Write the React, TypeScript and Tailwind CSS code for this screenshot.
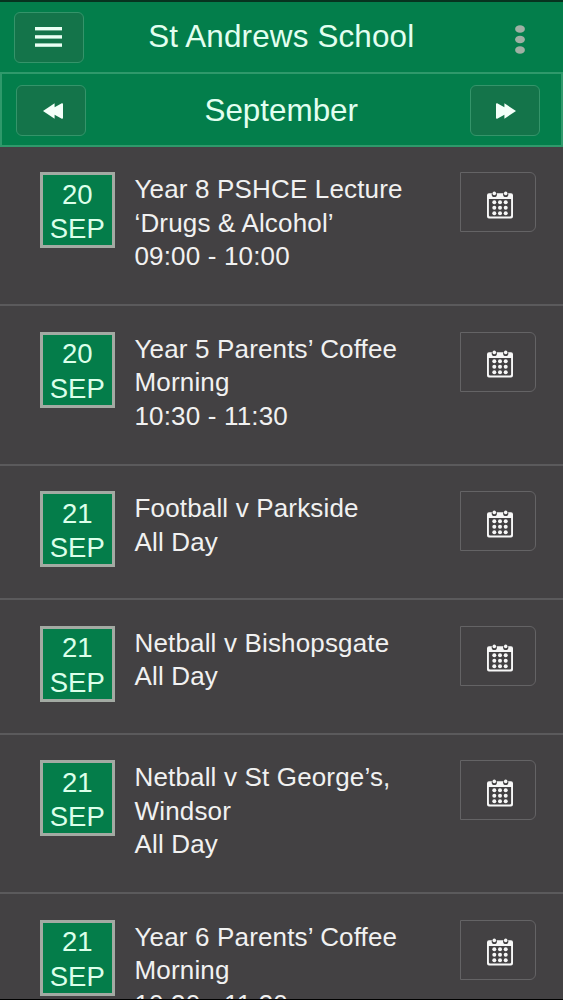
import clsx from "clsx";

type SchoolEvent = {
  day: string;
  month: string;
  lines: string[];
  tall: boolean;
};

const events: SchoolEvent[] = [
  { day: "20", month: "SEP", lines: ["Year 8 PSHCE Lecture", "‘Drugs & Alcohol’", "09:00 - 10:00"], tall: true },
  { day: "20", month: "SEP", lines: ["Year 5 Parents’ Coffee", "Morning", "10:30 - 11:30"], tall: true },
  { day: "21", month: "SEP", lines: ["Football v Parkside", "All Day"], tall: false },
  { day: "21", month: "SEP", lines: ["Netball v Bishopsgate", "All Day"], tall: false },
  { day: "21", month: "SEP", lines: ["Netball v St George’s,", "Windsor", "All Day"], tall: true },
  { day: "21", month: "SEP", lines: ["Year 6 Parents’ Coffee", "Morning", "10:30 - 11:30"], tall: true },
];

const barButton =
  "flex h-[51px] w-[70px] shrink-0 items-center justify-center rounded-md border-[1.5px] border-[#35946a] bg-[#14744a]";

function MenuIcon() {
  return (
    <svg width="27" height="20" viewBox="0 0 27 20" fill="#eafff4">
      <rect y="0" width="27" height="3.4" />
      <rect y="8.2" width="27" height="3.4" />
      <rect y="16.4" width="27" height="3.4" />
    </svg>
  );
}

function RewindIcon({ className }: { className?: string }) {
  return (
    <svg className={className} width="20" height="16" viewBox="0 0 20 16" fill="#f4fff9">
      <path d="M0 8 11.6 0.3V4.2L18.8 0.3Q20 0 20 1.2V14.8Q20 16 18.8 15.7L11.6 11.8V15.7Z" />
    </svg>
  );
}

function CalendarIcon() {
  return (
    <svg width="26" height="28" viewBox="0 0 26 28">
      <path
        fill="#f7f7f7"
        fillRule="evenodd"
        d="M2 2.2H24Q26 2.2 26 4.2V25.5Q26 27.5 24 27.5H2Q0 27.5 0 25.5V4.2Q0 2.2 2 2.2ZM1.9 8V24.3Q1.9 25.6 3.2 25.6H22.8Q24.1 25.6 24.1 24.3V8Z"
      />
      {[7.3, 18.7].map((x) => (
        <g key={x}>
          <circle cx={x} cy="3.4" r="2.6" fill="#434143" />
          <circle cx={x} cy="2.4" r="1.8" fill="#f7f7f7" />
        </g>
      ))}
      {[11.2, 16.7, 22.2].map((y) =>
        [7.3, 13, 18.7].map((x) => <circle key={`${x}-${y}`} cx={x} cy={y} r="2" fill="#f7f7f7" />)
      )}
    </svg>
  );
}

function EventRow({ event }: { event: SchoolEvent }) {
  return (
    <li
      className={clsx(
        "flex shrink-0 items-start border-b-2 border-[#5b5a5c] pt-[25.5px] pr-[27.5px] pl-[39.5px]",
        event.tall ? "h-[159.5px]" : "h-[134.5px]"
      )}
    >
      <div className="h-[76px] w-[75.5px] shrink-0 border-[3px] border-[#a3aaa3] bg-[#047d4a] pt-[2.6px] text-center text-[27.5px] leading-[34.5px] text-[#dcffea]">
        <div>{event.day}</div>
        <div>{event.month}</div>
      </div>
      <div className="ml-[19.5px] flex-1 pt-[1.4px] text-[26px] leading-[33.5px] tracking-[0.16px] whitespace-nowrap text-[#f1f1f1]">
        {event.lines.map((line) => (
          <p key={line}>{line}</p>
        ))}
      </div>
      <button className="flex h-[60px] w-[76px] shrink-0 items-center justify-center rounded-r-md border-[1.5px] border-[#646365] pt-[5px] pl-1">
        <CalendarIcon />
      </button>
    </li>
  );
}

export default function App() {
  return (
    <div className="flex h-[1000px] w-[563px] flex-col overflow-hidden border-b border-black bg-[#434143] font-['Liberation_Sans',Arial,sans-serif]">
      <header className="flex h-[71.5px] shrink-0 items-center justify-between border-t-2 border-[#07331f] bg-[#037e4b] pt-px pr-[38px] pl-[13.5px]">
        <button className={barButton}>
          <MenuIcon />
        </button>
        <h1 className="ml-0.5 text-[31.4px] leading-9 tracking-[0.16px] text-[#e2fff0]">St Andrews School</h1>
        <svg className="mt-[5px] ml-[38px]" width="10" height="29" viewBox="0 0 10 29" fill="#9fb0a4">
          <ellipse cx="5" cy="4" rx="4.9" ry="3.8" />
          <ellipse cx="5" cy="14.5" rx="4.9" ry="3.8" />
          <ellipse cx="5" cy="25" rx="4.9" ry="3.8" />
        </svg>
      </header>

      <nav className="flex h-[75px] shrink-0 items-center justify-between border-2 border-[#2f996b] bg-[#037e4b] pt-[3px] pr-[21px] pl-[13.5px]">
        <button className={barButton}>
          <RewindIcon className="ml-[5px]" />
        </button>
        <h2 className="ml-[7px] text-[31.4px] leading-9 text-[#e2fff0]">September</h2>
        <button className={barButton}>
          <RewindIcon className="ml-0.5 rotate-180" />
        </button>
      </nav>

      <ul className="flex min-h-0 flex-1 flex-col overflow-hidden">
        {events.map((event, i) => (
          <EventRow key={i} event={event} />
        ))}
      </ul>
    </div>
  );
}
